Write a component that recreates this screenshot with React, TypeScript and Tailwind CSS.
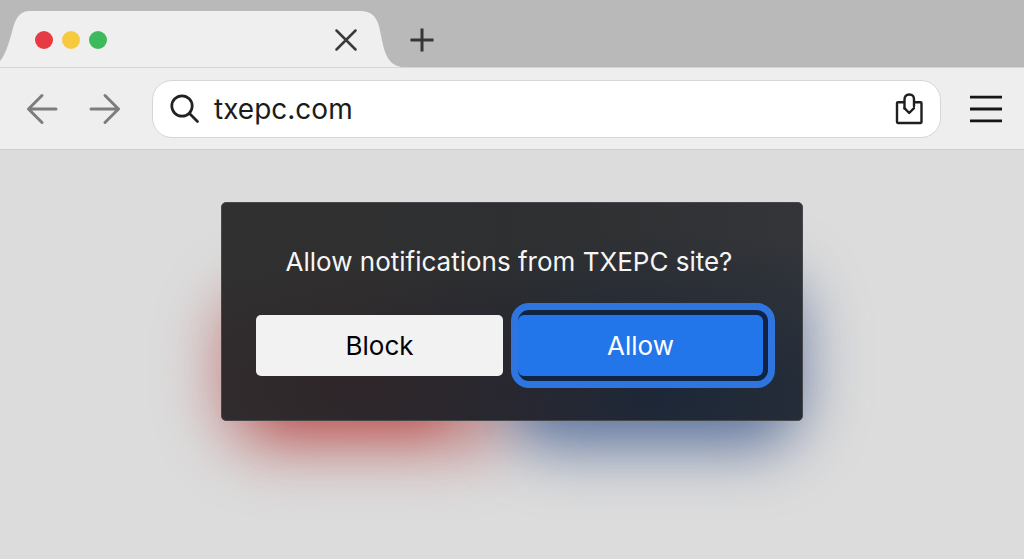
import { useState } from "react";

const WINDOW_DOTS = [
  { label: "Close window", color: "bg-[#e63b42]" },
  { label: "Minimize window", color: "bg-[#f7c93f]" },
  { label: "Zoom window", color: "bg-[#3dbb5c]" },
];

function CloseIcon() {
  return (
    <svg width="22" height="22" viewBox="0 0 22 22" fill="none" stroke="#3a3a3a" strokeWidth="2.5" strokeLinecap="round">
      <path d="M1.5 1.5 20.5 20.5M20.5 1.5 1.5 20.5" />
    </svg>
  );
}

function PlusIcon() {
  return (
    <svg width="24" height="24" viewBox="0 0 24 24" fill="none" stroke="#363636" strokeWidth="3">
      <path d="M12 .5V23.5M.5 12H23.5" />
    </svg>
  );
}

function ArrowIcon({ flip = false }: { flip?: boolean }) {
  return (
    <svg
      width="32"
      height="32"
      viewBox="0 0 32 32"
      fill="none"
      stroke="#7d7d7d"
      strokeWidth="3"
      strokeLinecap="round"
      strokeLinejoin="round"
      className={flip ? "rotate-180" : ""}
    >
      <path d="M30 16H2.5M16 2.5 2.5 16 16 29.5" />
    </svg>
  );
}

function SearchIcon() {
  return (
    <svg width="30" height="30" viewBox="0 0 30 30" fill="none" stroke="#222" strokeWidth="2.7" strokeLinecap="round">
      <circle cx="12" cy="12" r="10.2" />
      <path d="M19.5 19.5 27.5 27.5" />
    </svg>
  );
}

function BagIcon() {
  return (
    <svg width="28" height="32" viewBox="0 0 28 32" fill="none" stroke="#1f1f1f" strokeWidth="2.4" strokeLinecap="round" strokeLinejoin="round">
      <path d="M9 9.3H2.9Q2 9.3 2 10.2V29.1Q2 30 2.9 30H25.6Q26.5 30 26.5 29.1V10.2Q26.5 9.3 25.6 9.3H19.5" />
      <path d="M9.5 15.5V6.4Q9.5 1.5 14.3 1.5T19 6.4V13" />
      <path d="M9.5 15.2 14.2 20 19 15.2" />
    </svg>
  );
}

function MenuIcon() {
  return (
    <svg width="32" height="28" viewBox="0 0 32 28" stroke="#161616" strokeWidth="2.8">
      <path d="M0 2.2H32M0 14H32M0 25.8H32" />
    </svg>
  );
}

function TabStrip() {
  return (
    <div className="flex h-[68px] items-end border-b border-[#d5d5d5] bg-[#b9b9b9]">
      <div className="relative flex h-14 w-[404px] shrink-0 items-center justify-between pt-0.5 pr-[47px] pl-[35px]">
        <svg className="absolute inset-0 h-full w-full" viewBox="0 0 404 56" preserveAspectRatio="none" aria-hidden="true">
          <path
            d="M0 56V50C6 43 9 31 12 21C15 8 19 0 30 0H360C371 0 376 5 379 15L383 34C386 46 391 56 404 56Z"
            fill="#efefef"
          />
        </svg>
        <div className="relative flex gap-[9px]">
          {WINDOW_DOTS.map((dot) => (
            <button key={dot.label} aria-label={dot.label} className={`size-[18px] rounded-full ${dot.color}`} />
          ))}
        </div>
        <button aria-label="Close tab" className="relative">
          <CloseIcon />
        </button>
      </div>
      <button aria-label="New tab" className="flex h-14 items-center pt-0.5 pl-1.5">
        <PlusIcon />
      </button>
    </div>
  );
}

function Toolbar() {
  return (
    <div className="flex h-[82px] items-center border-b border-[#cdcdcd] bg-[#eeeeee] pr-[22px] pl-[26px]">
      <div className="flex gap-[31px]">
        <button aria-label="Back">
          <ArrowIcon />
        </button>
        <button aria-label="Forward">
          <ArrowIcon flip />
        </button>
      </div>
      <div className="ml-[31px] flex h-[58px] flex-1 items-center rounded-[20px] border border-[#d6d6d6] bg-white pr-[17px] pl-[17px]">
        <SearchIcon />
        <input
          aria-label="Address"
          defaultValue="txepc.com"
          spellCheck={false}
          className="ml-3.5 min-w-0 flex-1 bg-transparent text-[28px] leading-9 text-[#1c1c1c] outline-none"
        />
        <button aria-label="Save page">
          <BagIcon />
        </button>
      </div>
      <button aria-label="Menu" className="ml-[29px]">
        <MenuIcon />
      </button>
    </div>
  );
}

function PermissionDialog({ onAnswer }: { onAnswer: (answer: string) => void }) {
  return (
    <div className="relative w-full max-w-[582px]">
      {/* coloured glow behind the panel: a wide haze with a tighter core */}
      <div className="absolute top-20 -bottom-9 -left-2 w-[52%] rounded-[60px] bg-[#b5494a]/50 blur-[28px]" />
      <div className="absolute top-16 -right-2 -bottom-9 w-[54%] rounded-[60px] bg-[#4a6291]/55 blur-[28px]" />
      <div className="absolute top-32 -bottom-2 left-[6%] w-[34%] rounded-[40px] bg-[#b8302f]/60 blur-[22px]" />
      <div className="absolute top-28 right-[4%] -bottom-2 w-[44%] rounded-[40px] bg-[#33538c]/50 blur-[22px]" />

      <div
        role="dialog"
        aria-labelledby="permission-title"
        className="relative rounded-[5px] border border-[#47484b] bg-[#2e2e2f] bg-[radial-gradient(ellipse_at_25%_85%,#30202499,transparent_50%),radial-gradient(ellipse_at_75%_90%,#1c2738,transparent_60%),linear-gradient(90deg,#303030,#2e2f30_50%,#333539)] pt-[41px] pb-8"
      >
        <h1 id="permission-title" className="pr-1.5 text-center text-[26px] leading-9 text-[#f6f6f6]">
          Allow notifications from TXEPC site?
        </h1>
        <div className="mt-[23px] grid grid-cols-[247fr_264fr] items-center gap-2 pr-[27px] pl-[34px]">
          <button
            onClick={() => onAnswer("block")}
            className="h-[61px] rounded-[5px] bg-[#f2f2f2] text-[26px] leading-9 text-black"
          >
            Block
          </button>
          <div className="rounded-[18px] border-[7px] border-[#2f75e0] bg-[#102340] py-[5px] pr-[5px]">
            <button
              onClick={() => onAnswer("allow")}
              className="h-[61px] w-full rounded-[6px] bg-[#2375ea] text-[26px] leading-9 text-white"
            >
              Allow
            </button>
          </div>
        </div>
      </div>
    </div>
  );
}

export default function App() {
  const [answer, setAnswer] = useState<string | null>(null);

  return (
    <div className="flex min-h-screen flex-col overflow-hidden bg-[#dcdcdc] font-['Inter',sans-serif]">
      <TabStrip />
      <Toolbar />
      <main className="flex flex-1 items-start justify-center px-6 pt-[52px] pb-16">
        {answer === null && <PermissionDialog onAnswer={setAnswer} />}
      </main>
    </div>
  );
}
